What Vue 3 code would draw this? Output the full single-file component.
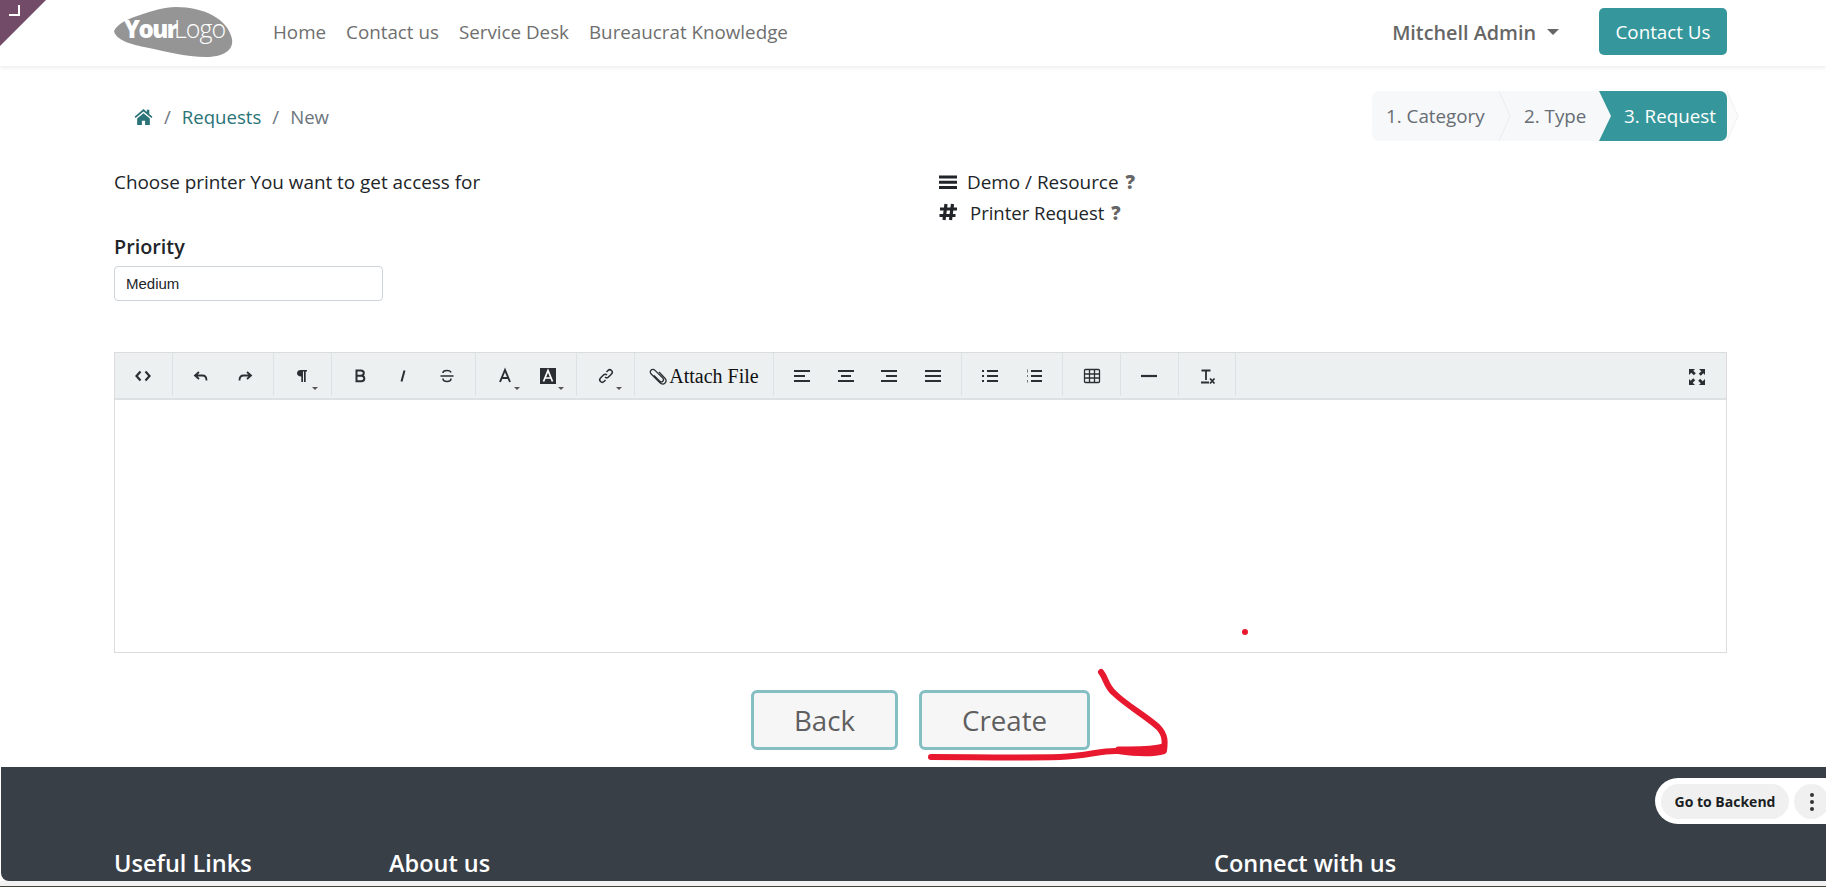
<template>
  <div class="page">
    <div class="corner">
      <svg width="12" height="12" viewBox="0 0 12 12"><path d="M10 0v10H0" fill="none" stroke="#fff" stroke-width="2" /></svg>
    </div>

    <header class="topbar">
      <svg class="logo" width="120" height="50" viewBox="0 0 120 50">
        <path d="M0 24C4 16 14 12 26 8C38 4 50 0 62 0C90 0 114 12 118 32C120 44 108 50 92 50C72 50 50 44 30 40C16 37 2 33 0 24Z" fill="#959595" />
        <text x="10" y="31" class="logo-your">Your</text>
        <text x="60" y="31" class="logo-light">Logo</text>
      </svg>
      <nav class="nav">
        <a v-for="item in navItems" :key="item">{{ item }}</a>
      </nav>
      <div class="user">
        <span>Mitchell Admin</span>
        <i class="caret"></i>
      </div>
      <button class="contact">Contact Us</button>
    </header>

    <main class="content">
      <div class="crumb-row">
        <div class="crumbs">
          <svg width="19" height="17" viewBox="0 0 18 16"><path d="M9 1 0.5 8.2l1 1.2L9 3.2l7.5 6.2 1-1.2L14.500 5.700V1.500h-2.400v2.200L9 1ZM3 10v6h4.500v-4h3v4H15v-6L9 5 3 10Z" fill="#2a7378" /></svg>
          <span class="sep">/</span>
          <a>Requests</a>
          <span class="sep">/</span>
          <span class="current">New</span>
        </div>
        <div class="steps">
          <div class="track">
            <div class="step step-one">1. Category
              <svg class="divider" width="12" height="50" viewBox="0 0 12 50"><path d="M0 0l11 25L0 50" fill="none" stroke="#eaecef" /></svg>
            </div>
            <div class="step step-two">2. Type</div>
            <div class="step step-active">3. Request</div>
          </div>
          <svg class="tail" width="12" height="50" viewBox="0 0 12 50"><path d="M0 0l11 25L0 50" fill="#fbfbfc" stroke="#eef0f2" /></svg>
        </div>
      </div>

      <div class="info">
        <div class="info-left">
          <p class="lead">Choose printer You want to get access for</p>
          <label class="prio-label">Priority</label>
          <div class="select">Medium</div>
        </div>
        <div class="info-right">
          <div class="meta">
            <svg width="18" height="16" viewBox="0 0 18 16"><path d="M0 1.500h18v3H0zM0 6.700h18v3H0zM0 12h18v3H0z" fill="#212529" /></svg>
            <span>Demo / Resource</span><b>?</b>
          </div>
          <div class="meta meta-second">
            <svg width="18" height="18" viewBox="0 0 18 18"><path d="M7 1 5 17M13.500 1l-2 16M1 6h17M.5 12.500h16" fill="none" stroke="#212529" stroke-width="3.200" /></svg>
            <span>Printer Request</span><b>?</b>
          </div>
        </div>
      </div>

      <div class="editor">
        <div class="toolbar">
          <div v-for="(group, i) in toolbar" :key="i" class="tool-group">
            <button v-for="tool in group" :key="tool.name" class="tool" :class="{ wide: tool.label }">
              <svg width="18" height="18" viewBox="0 0 18 18" v-html="tool.svg"></svg>
              <span v-if="tool.label" class="attach">{{ tool.label }}</span>
              <i v-if="tool.drop" class="mini-caret"></i>
            </button>
          </div>
          <button class="tool expand">
            <svg width="18" height="18" viewBox="0 0 18 18"><path d="M1 1h6L5.300 2.700l2.500 2.500-2 2-2.500-2.500L1 7zM17 1v6l-1.700-1.700-2.500 2.500-2-2 2.500-2.500L11 1zM1 17v-6l1.700 1.700 2.500-2.500 2 2-2.500 2.500L7 17zM17 17h-6l1.700-1.700-2.500-2.500 2-2 2.500 2.500L17 11z" fill="#2b2f33" /></svg>
          </button>
        </div>
        <div class="editor-body"></div>
      </div>

      <div class="actions">
        <button class="action back">Back</button>
        <button class="action create">Create</button>
      </div>
    </main>

    <footer class="footer">
      <h4>Useful Links</h4>
      <h4>About us</h4>
      <h4>Connect with us</h4>
    </footer>
    <div class="strip"></div>

    <div class="backend">
      <span class="backend-btn">Go to Backend</span>
      <span class="backend-more"><i></i><i></i><i></i></span>
    </div>

    <svg class="scribble" width="1826" height="887" viewBox="0 0 1826 887">
      <circle cx="1245" cy="632" r="3" fill="#e8192f" />
      <path d="M1101 672C1106 678 1106 686 1114 693C1126 705 1146 716 1158 727C1166 735 1165 743 1164 751C1150 755 1132 753 1118 751C1102 750 1088 756 1060 757C1020 758 970 757 931 757" fill="none" stroke="#e8192f" stroke-width="6" stroke-linecap="round" stroke-linejoin="round" />
      <path d="M1164 746C1150 750 1130 749 1118 749" fill="none" stroke="#e8192f" stroke-width="5" stroke-linecap="round" />
    </svg>
  </div>
</template>

<script setup>
const navItems = ['Home', 'Contact us', 'Service Desk', 'Bureaucrat Knowledge']

const line = (d, w = 1.8) => `<path d="${d}" fill="none" stroke="#2b2f33" stroke-width="${w}" />`

const toolbar = [
  [{ name: 'code', svg: line('M6.500 4.500 2.500 9l4 4.500M11.500 4.500l4 4.500-4 4.500', 2.2) }],
  [
    { name: 'undo', svg: line('M7 5 3 8.500 7 12M3.500 8.500h7c3 0 4 2 4 5') },
    { name: 'redo', svg: line('M11 5l4 3.500-4 3.500M14.500 8.500h-7c-3 0-4 2-4 5') }
  ],
  [{ name: 'para', drop: true, svg: '<path d="M7.500 3H14v1.500h-1.300V15h-1.700V4.500H10V15H8.300V9.500C5.500 9.500 4 8.300 4 6.300S5.300 3 7.500 3Z" fill="#2b2f33" />' }],
  [
    { name: 'bold', svg: line('M5.500 3.500h4.300c2 0 3 1 3 2.600s-1 2.600-3 2.600H5.500h4.800c2 0 3 1.100 3 2.800s-1 2.800-3 2.800H5.500Z', 2) },
    { name: 'italic', svg: line('M10.500 3.500 7.500 14.500', 2) },
    { name: 'strike', svg: line('M13 5.500C12.500 4 11 3.500 9 3.500 6.500 3.500 5 4.500 5 6M5 11.500c0 2 1.500 3 4 3s4-1 4-3M2.500 9h13', 1.600) }
  ],
  [
    { name: 'fore', drop: true, svg: line('M4 15 9 3l5 12M5.500 11h7', 1.900) },
    { name: 'back', drop: true, svg: '<rect x="1" y="1" width="16" height="16" fill="#2b2f33" />' + '<path d="M4.500 14.500 9 3.500l4.500 11M6 11h6" fill="none" stroke="#fff" stroke-width="1.700" />' }
  ],
  [{ name: 'link', drop: true, svg: line('M8 10c1 1 2.500 1 3.500 0l3-3c1-1 1-2.500 0-3.500s-2.500-1-3.500 0L9.500 5M10 8C9 7 7.500 7 6.500 8l-3 3c-1 1-1 2.500 0 3.500s2.500 1 3.500 0L8.500 13', 1.500) }],
  [{ name: 'attach', label: 'Attach File', svg: line('M5 8.500l5.500 5.500c1 1 2.500 1 3.300.2s.8-2.300-.2-3.300L6 3.400C4.800 2.200 3 2.200 2 3.200S1 5.800 2.200 7l8.500 8.500c1.800 1.800 4 1.800 5.300.5s1.300-3.500-.5-5.300L10 5', 1.300) }],
  [
    { name: 'left', svg: line('M1 4h16M1 9h11M1 14h16', 1.900) },
    { name: 'center', svg: line('M1 4h16M4 9h10M1 14h16', 1.900) },
    { name: 'right', svg: line('M1 4h16M6 9h11M1 14h16', 1.900) },
    { name: 'justify', svg: line('M1 4h16M1 9h16M1 14h16', 1.900) }
  ],
  [
    { name: 'ul', svg: line('M6 4h11M6 9h11M6 14h11', 1.900) + '<path d="M1 3h2v2H1zM1 8h2v2H1zM1 13h2v2H1z" fill="#2b2f33" />' },
    { name: 'ol', svg: line('M6 4h11M6 9h11M6 14h11', 1.900) + '<path d="M2 2.500h1v3H2zM2 8h1v2H2zM2 13h1v2.500H2z" fill="#777" />' }
  ],
  [{ name: 'table', svg: line('M1.500 3.500a1 1 0 0 1 1-1h13a1 1 0 0 1 1 1v11a1 1 0 0 1-1 1h-13a1 1 0 0 1-1-1ZM1.500 7h15M1.500 11h15M6.500 2.500v13M11.500 2.500v13', 1.300) }],
  [{ name: 'hr', svg: line('M1 9h16', 2.200) }],
  [{ name: 'clear', svg: line('M3.500 3.500h9M8 3.500V13M3 15.500h8', 1.800) + line('M12 11.500l4.500 5M16.500 11.500l-4.500 5', 1.800) }]
]
</script>

<style scoped>
.page {
  position: relative;
  height: 887px;
  overflow: hidden;
  display: flex;
  flex-direction: column;
  background: #fff;
  font-family: "Open Sans", "Noto Sans", sans-serif;
  color: #212529;
}

.corner {
  position: absolute;
  left: 0;
  top: 0;
  width: 46px;
  height: 46px;
  background: #714b67;
  clip-path: polygon(0 0, 100% 0, 0 100%);
  z-index: 3;
}

.corner svg {
  position: absolute;
  left: 9px;
  top: 5px;
}

.topbar {
  flex: none;
  height: 66px;
  box-sizing: border-box;
  display: flex;
  align-items: center;
  padding: 0 99px 0 114px;
  background: #fff;
  box-shadow: 0 2px 4px rgba(0, 0, 0, 0.07);
  z-index: 1;
}

.logo {
  flex: none;
  margin-top: -3px;
}

.logo-your {
  font: 800 24px "Open Sans", sans-serif;
  letter-spacing: -1.5px;
  fill: #fff;
}

.logo-light {
  font: 300 25px "Open Sans", sans-serif;
  letter-spacing: -1px;
  fill: #fff;
}

.nav {
  display: flex;
  gap: 20px;
  margin-left: 39px;
  margin-top: -2px;
  flex: 1;
  font-size: 18.800px;
  color: #6f6f6f;
}

.user {
  display: flex;
  align-items: center;
  margin-top: -2px;
  font-size: 19.800px;
  font-weight: 600;
  color: #666;
}

.caret {
  margin-left: 11px;
  border: 6px solid transparent;
  border-top-color: #666;
  border-bottom: 0;
}

.contact {
  margin-left: 40px;
  width: 128px;
  height: 47px;
  margin-top: -3px;
  border: 0;
  border-radius: 5px;
  background: #35979c;
  color: #fff;
  font: inherit;
  font-size: 18.800px;
}

.content {
  flex: 1;
  padding: 25px 99px 0 114px;
  display: flex;
  flex-direction: column;
}

.crumb-row {
  display: flex;
  justify-content: space-between;
  align-items: center;
  height: 50px;
}

.crumbs {
  display: flex;
  align-items: center;
  margin-left: 20px;
  font-size: 18.600px;
  color: #2a7378;
}

.sep {
  margin: 0 11px;
  color: #6c757d;
}

.current {
  color: #6c757d;
}

.steps {
  display: flex;
  margin-right: -12px;
}

.track {
  display: flex;
  width: 355px;
  height: 50px;
  border-radius: 7px;
  overflow: hidden;
  background: #f7f8f9;
  font-size: 18.800px;
  color: #666d75;
}

.step {
  position: relative;
  line-height: 50px;
  white-space: nowrap;
}

.step-one {
  width: 133px;
  padding-left: 14px;
  box-sizing: border-box;
}

.divider {
  position: absolute;
  right: -6px;
  top: 0;
}

.step-two {
  width: 94px;
  padding-left: 19px;
  box-sizing: border-box;
}

.step-active {
  width: 128px;
  padding-left: 25px;
  box-sizing: border-box;
  color: #fff;
  background: #35979c;
  clip-path: polygon(0 0, 100% 0, 100% 100%, 0 100%, 12px 50%);
}

.info {
  display: flex;
  margin-top: 26px;
}

.info-left {
  width: 825px;
}

.lead {
  margin: 0;
  height: 30px;
  line-height: 30px;
  font-size: 18.900px;
}

.prio-label {
  display: block;
  margin-top: 38px;
  line-height: 24px;
  font-size: 19.800px;
  font-weight: 600;
}

.select {
  width: 269px;
  height: 35px;
  margin-top: 7px;
  box-sizing: border-box;
  padding-left: 11px;
  border: 1px solid #ced4da;
  border-radius: 4px;
  font: 15px/33px "Liberation Sans", sans-serif;
}

.meta {
  display: flex;
  align-items: center;
  height: 30px;
  font-size: 18.900px;
}

.meta span {
  margin-left: 10px;
}

.meta b {
  margin-left: 7px;
  font-weight: 800;
  color: #666;
}

.meta-second {
  font-size: 18.500px;
}

.meta-second span {
  margin-left: 13px;
}

.editor {
  margin-top: 51px;
  border: 1px solid #dcdcdc;
  display: flex;
  flex-direction: column;
}

.toolbar {
  display: flex;
  height: 45px;
  background: #ecf0f1;
  border-bottom: 2px solid #dce2e3;
}

.tool-group {
  display: flex;
  padding: 0 6.600px;
  border-right: 1px solid #dbe3e6;
  margin-bottom: 2px;
}

.tool {
  position: relative;
  width: 43.500px;
  padding: 3px 0 0;
  border: 0;
  background: none;
  display: flex;
  align-items: center;
  justify-content: center;
}

.tool.wide {
  width: 124.500px;
  gap: 2px;
}

.attach {
  font: 20px "Liberation Serif", serif;
  color: #111;
  white-space: nowrap;
}

.mini-caret {
  position: absolute;
  right: 6px;
  bottom: 6px;
  border: 3px solid transparent;
  border-top-color: #555;
  border-bottom: 0;
}

.expand {
  margin-left: auto;
  margin-right: 7px;
}

.editor-body {
  height: 252px;
}

.actions {
  display: flex;
  justify-content: center;
  gap: 21px;
  margin-top: 37px;
}

.action {
  height: 60px;
  box-sizing: border-box;
  border: 3px solid #85bfc3;
  border-radius: 6px;
  background: #f6f6f6;
  color: #5f5f5f;
  font: inherit;
  font-size: 27.700px;
}

.back {
  width: 147px;
}

.create {
  width: 171px;
}

.footer {
  flex: none;
  height: 114px;
  margin-left: 1px;
  box-sizing: border-box;
  padding: 80px 0 0 113px;
  display: grid;
  grid-template-columns: 275px 825px 1fr;
  background: #393f47;
  border-bottom-left-radius: 8px;
}

.footer h4 {
  margin: 0;
  line-height: 32px;
  font-size: 23.500px;
  font-weight: 600;
  color: #fff;
}

.strip {
  flex: none;
  height: 6px;
  background: linear-gradient(#f2f2f2 5px, #44443a 5px);
}

.backend {
  position: absolute;
  left: 1655px;
  top: 778px;
  width: 200px;
  height: 46px;
  box-sizing: border-box;
  padding: 6px;
  display: flex;
  gap: 5px;
  background: #fff;
  border-radius: 23px;
}

.backend-btn {
  width: 128px;
  height: 35px;
  border-radius: 18px;
  background: #f0f0f0;
  text-align: center;
  font: 700 14px/35px "Open Sans", sans-serif;
  color: #1b1f24;
}

.backend-more {
  width: 35px;
  height: 35px;
  flex: none;
  border-radius: 50%;
  background: #f0f0f0;
  display: flex;
  flex-direction: column;
  align-items: center;
  justify-content: center;
  gap: 3px;
}

.backend-more i {
  width: 4px;
  height: 4px;
  border-radius: 50%;
  background: #333;
}

.scribble {
  position: absolute;
  left: 0;
  top: 0;
  pointer-events: none;
}
</style>
